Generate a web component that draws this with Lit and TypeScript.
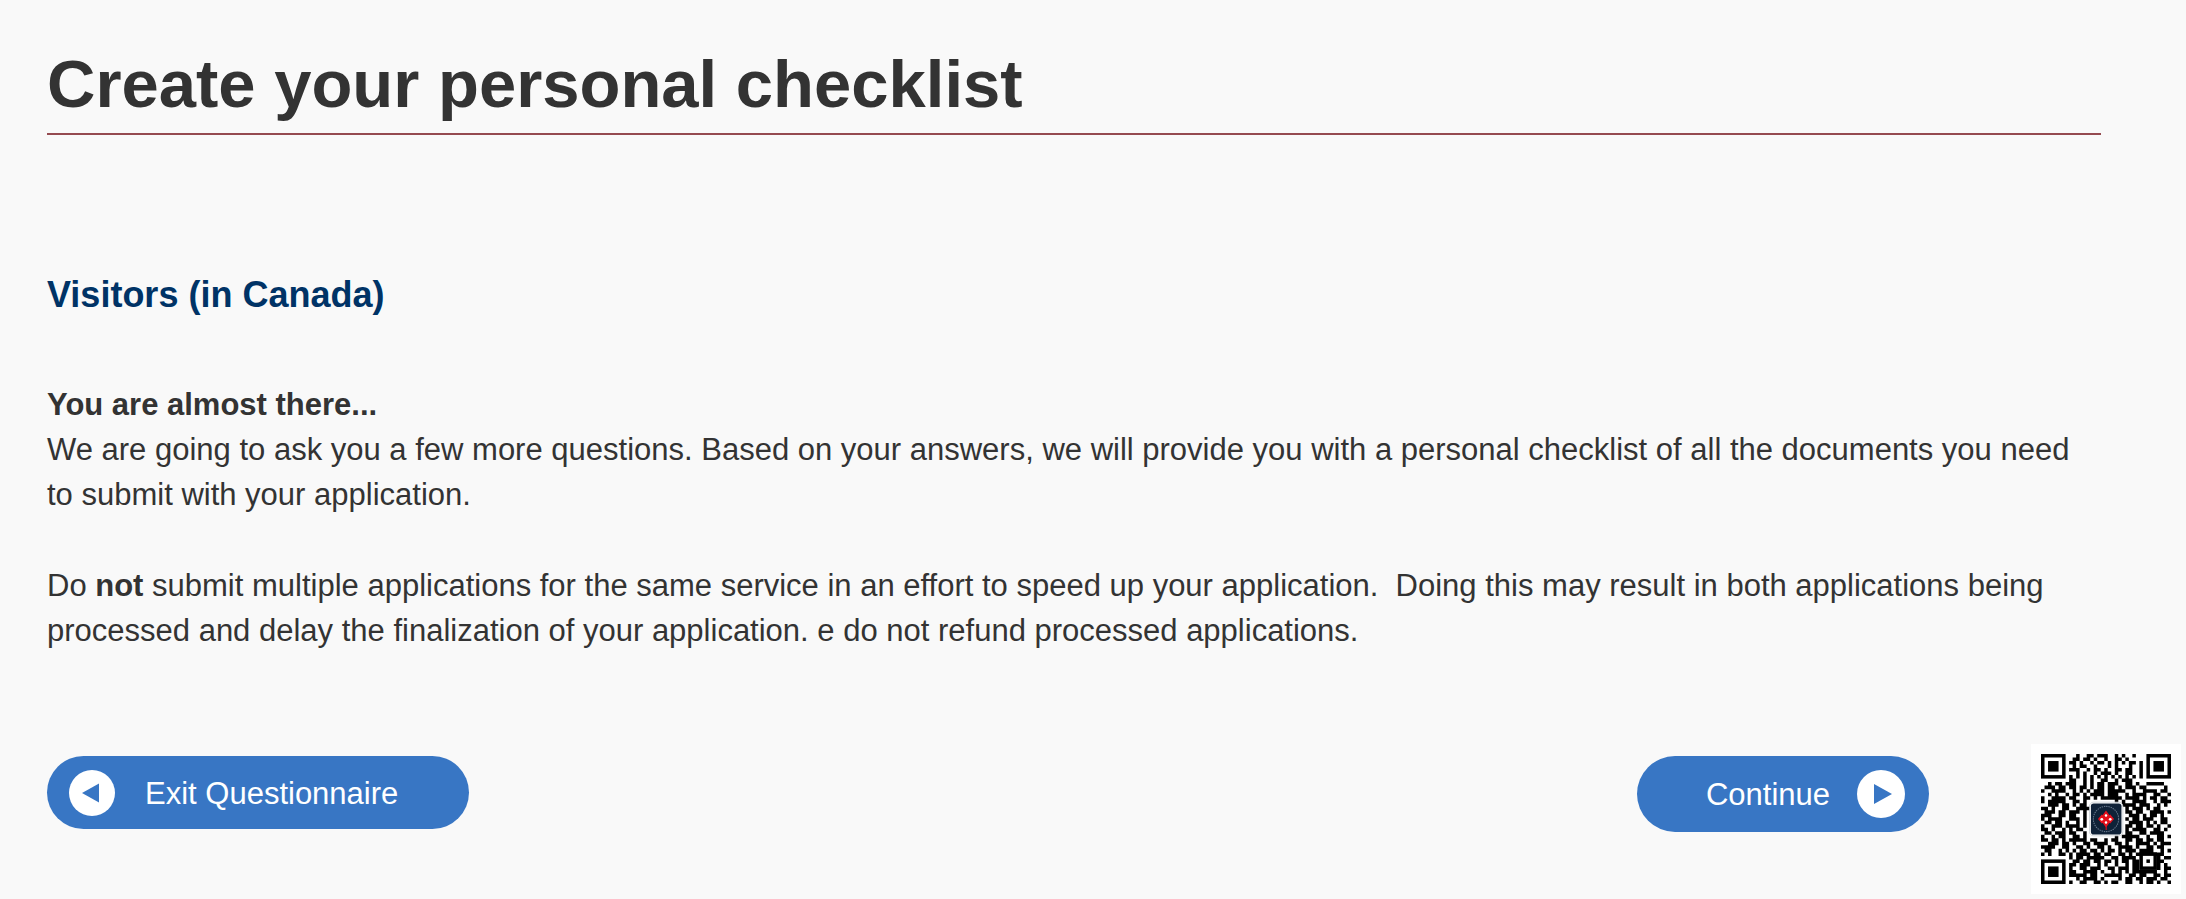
import { LitElement, html, css, svg } from "lit";
import { customElement } from "lit/decorators.js";

const QR_SIZE = 37;

// Data modules of the code; finder and alignment patterns are added separately.
const QR_ROWS = [
  "..........#..##.###..#.#..#..........",
  ".........##.##.#..#..##.#............",
  "........##.#..#.##.#.#.#.##.#........",
  ".........#.##..#...#.#...#..#........",
  "........###..#.##.#..##.##..#........",
  "..........#.#..#.###.#..##..#........",
  "........#.#.#.#.#.#.#.#.#.#.#........",
  "........##..#.#..##..#.###...........",
  "..#.##.###..#.#.##.###..##.#..#####..",
  ".###.##.##.##.#.##.##.#.###.##.....#.",
  "#..####..#.#.#.###.#####..#..####.##.",
  "..#.#..#.##.#.####.###..#.####..##..#",
  "#..####.##..##.#.######.####.#.##.##.",
  "#.#####..##.#........#.#..####..#.###",
  "..###.##.#.##..........####.###..#.#.",
  "##.#..##..####..........#.###.#.##...",
  ".###.##.###.#...........##.##..####.#",
  "###..##.##..#............###.#.##.#..",
  "#.####..###.#...........#.##.###..##.",
  ".##.##.#..#.#............####.#.#.##.",
  "#..###.####.#...........##.##.##.#..#",
  "##.#..#.#.##............#.####..##.#.",
  ".##.###.##..#...........##..##.####..",
  "#..#.##..##.#........#.#####..#..##.#",
  "##.##.#.#####.##..#.##..##.##.##.##..",
  "..###.##.#..##.####..##.#..####.#.###",
  "####..##..##.#..##.#..####.#..##.##..",
  ".##..#.#.#.##.##.#.##.#.###.####..#.#",
  "#.#..##.#.####.##.##..##.#.########..",
  "........#.##.#####..##.####......#.##",
  ".........##.##.##.##.#.##.##.....##..",
  "........##.###..#.#..#..#.##.....#.#.",
  "........#..##.###..##.###.##.....#.##",
  "........##..####.#..#.#.#.#######..#.",
  "........#####.##..#####..##.##..##.##",
  "..........#.####.#....#.##.##.###.##.",
  "........#..##..##.#.##..##..#.##.#..#",
];

function modulePath(): string {
  let d = "";
  QR_ROWS.forEach((row, y) => {
    for (let x = 0; x < QR_SIZE; x++) {
      if (row[x] === "#") {
        let run = 1;
        while (row[x + run] === "#") run++;
        d += `M${x} ${y}h${run}v1h-${run}z`;
        x += run;
      }
    }
  });
  return d;
}

const finder = (x: number, y: number) => svg`
  <rect x=${x + 0.5} y=${y + 0.5} width="6" height="6" fill="#fff" stroke="#000"></rect>
  <rect x=${x + 2} y=${y + 2} width="3" height="3"></rect>`;

@customElement("qr-badge")
export class QrBadge extends LitElement {
  static styles = css`
    :host {
      display: block;
      box-sizing: border-box;
      width: 150px;
      padding: 10px;
      background: #fff;
    }
    .code {
      display: block;
      width: 100%;
      height: auto;
    }
  `;

  render() {
    return html`
      <svg class="code" viewBox="0 0 37 37" role="img" aria-label="QR code">
        <path d=${modulePath()}></path>
        ${finder(0, 0)} ${finder(30, 0)} ${finder(0, 30)}
        <rect x="28.5" y="28.5" width="4" height="4" fill="#fff" stroke="#000"></rect>
        <rect x="30" y="30" width="1" height="1"></rect>
        <rect x="13.8" y="13.7" width="9.5" height="9.6" rx="1.2" fill="#fff" stroke="#bfc5cc" stroke-width=".2"></rect>
        <rect x="14.2" y="14.1" width="8.7" height="8.8" rx=".8" fill="#0f2238"></rect>
        <circle cx="18.5" cy="18.5" r="3.6" fill="none" stroke="#66778b" stroke-width=".3" stroke-dasharray=".4 .25"></circle>
        <g fill="#e3101b">
          <path d="M18.5 16.100l1 1.300-1 1.200-1-1.200zM17.300 17.200l1.200 1.300-1.200 1.300-1.100-1.300zM19.700 17.200l1.100 1.300-1.100 1.300-1.200-1.300zM18.500 18.500l1 1.100-1 1.300-1-1.300z"></path>
          <path d="M18.400 20.500h.3v1.100h-.3z"></path>
        </g>
        <g fill="#fff">
          <circle cx="18.5" cy="17.5" r=".35"></circle>
          <circle cx="17.3" cy="18.6" r=".4"></circle>
          <circle cx="19.7" cy="18.6" r=".4"></circle>
          <circle cx="18.5" cy="19.5" r=".35"></circle>
        </g>
      </svg>
    `;
  }
}

@customElement("app-root")
export class AppRoot extends LitElement {
  static styles = css`
    :host {
      display: block;
      box-sizing: border-box;
      min-height: 100vh;
      padding: 46px 5px 5px 47px;
      background: #f9f9f9;
      color: #333;
      font: 31px/45px "Liberation Sans", Arial, sans-serif;
    }
    .content {
      padding-right: 80px;
    }
    .title {
      margin: 0;
      padding-bottom: 11px;
      border-bottom: 2px solid #954b50;
      font-size: 67px;
      line-height: 76px;
    }
    .subtitle {
      margin: 140px 0 67px;
      color: #036;
      font-size: 36px;
      line-height: 40px;
    }
    .text {
      margin: 0 0 46px;
    }
    .text:last-child {
      margin: 0;
    }
    .actions {
      display: flex;
      align-items: flex-start;
      padding-top: 91px;
    }
    .button {
      display: flex;
      align-items: center;
      margin: 12px 0 0;
      border: 0;
      border-radius: 38px;
      background: #3876c4;
      color: #fff;
      font: inherit;
      cursor: pointer;
    }
    .exit {
      gap: 30px;
      padding: 14px 71px 13px 22px;
    }
    .continue {
      gap: 27px;
      margin-left: auto;
      margin-right: 102px;
      padding: 14px 24px 14px 69px;
    }
    .icon {
      display: block;
      flex: none;
      width: 46px;
      height: 46px;
    }
    .continue .icon {
      width: 48px;
      height: 48px;
    }
  `;

  render() {
    return html`
      <main>
        <div class="content">
          <h1 class="title">Create your personal checklist</h1>
          <h2 class="subtitle">Visitors (in Canada)</h2>
          <p class="text">
            <strong>You are almost there...</strong><br />
            We are going to ask you a few more questions. Based on your answers,
            we will provide you with a personal checklist of all the documents
            you need to submit with your application.
          </p>
          <p class="text">
            Do <strong>not</strong> submit multiple applications for the same
            service in an effort to speed up your application.&nbsp; Doing this
            may result in both applications being processed and delay the
            finalization of your application. e do not refund processed
            applications.
          </p>
        </div>
        <div class="actions">
          <button class="button exit" type="button">
            <svg class="icon" viewBox="0 0 46 46" aria-hidden="true">
              <circle cx="23" cy="23" r="23" fill="#fff"></circle>
              <path d="M13 23L30 13.500v19z" fill="#3876c4"></path>
            </svg>
            Exit Questionnaire
          </button>
          <button class="button continue" type="button">
            Continue
            <svg class="icon" viewBox="0 0 48 48" aria-hidden="true">
              <circle cx="24" cy="24" r="24" fill="#fff"></circle>
              <path d="M35 24L17 14v20z" fill="#3876c4"></path>
            </svg>
          </button>
          <qr-badge></qr-badge>
        </div>
      </main>
    `;
  }
}
